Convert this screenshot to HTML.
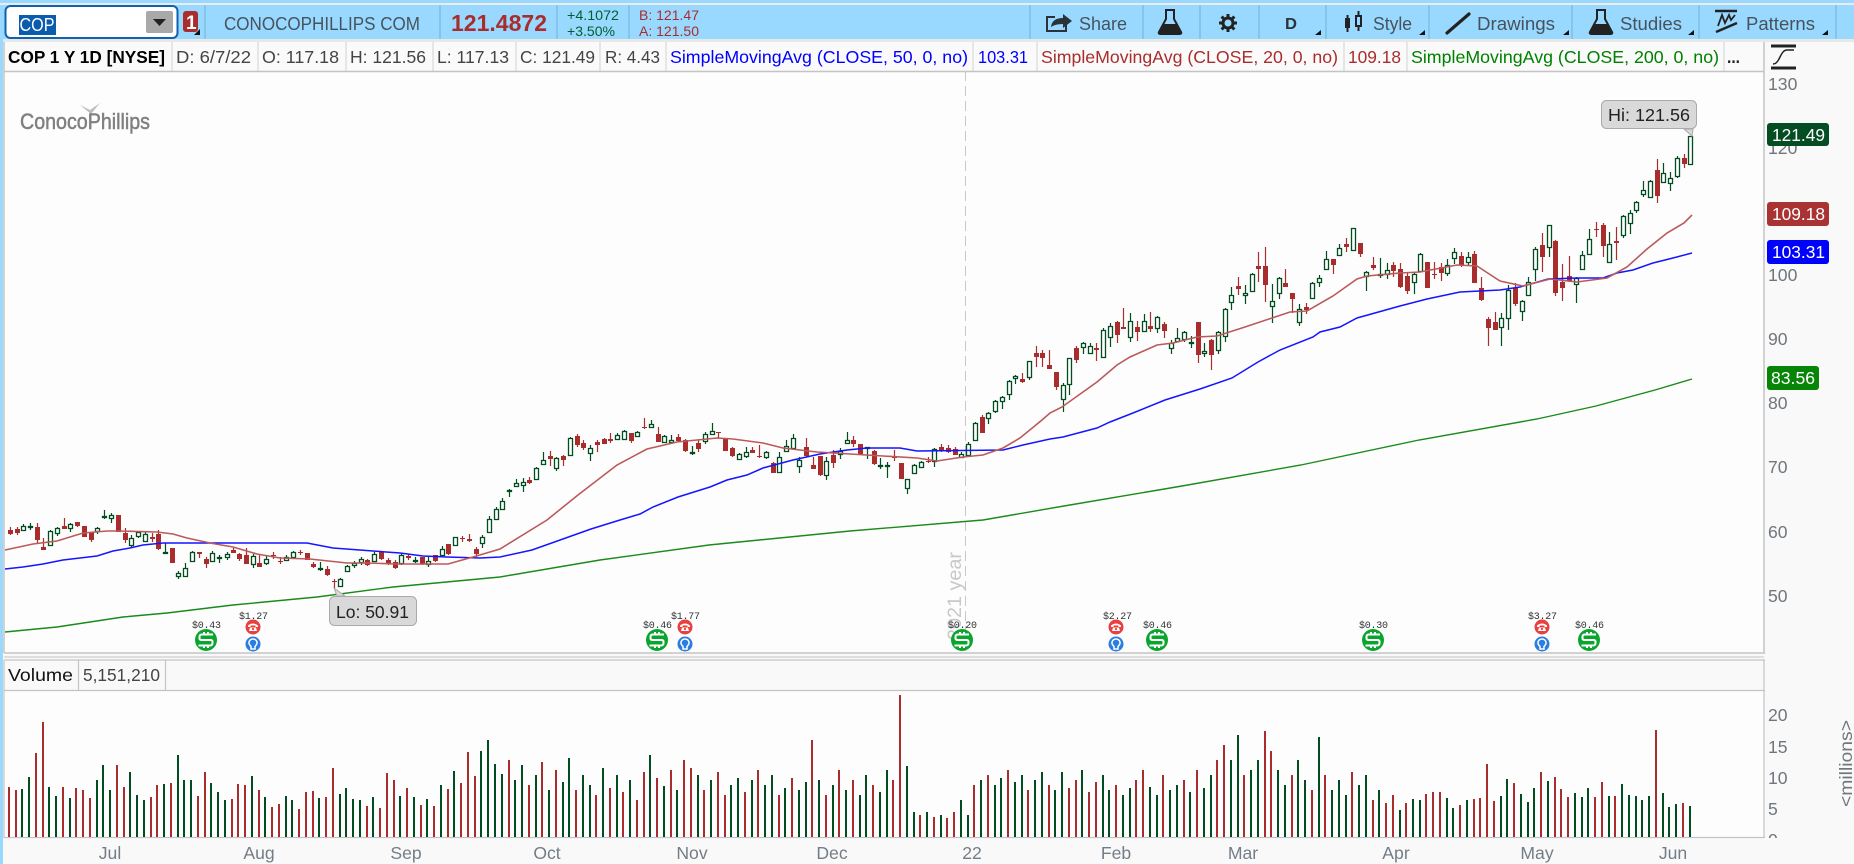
<!DOCTYPE html>
<html><head><meta charset="utf-8"><title>COP</title>
<style>html,body{margin:0;padding:0;background:#f9f9f9}svg{display:block}
text{font-family:"Liberation Sans",sans-serif}
.i{font-size:17.6px;fill:#444}.a{font-size:17.6px;fill:#6f767c}.t{font-size:18.5px;fill:#46535d}.e{font-family:"Liberation Mono",monospace;font-size:10px;fill:#333}</style></head>
<body>
<svg xmlns="http://www.w3.org/2000/svg" width="1854" height="864" viewBox="0 0 1854 864">
<defs>
<g id="flask"><path d="M-5 1h10M-4 1v9l-7 13q-1 2 2 2h18q3 0 2-2L4 10V1" fill="none" stroke="#222" stroke-width="2"/><path d="M-7 15H7l4 8q1 2-2 2H-9q-3 0-2-2z" fill="#222"/></g>
<g id="usd"><circle r="11" fill="#0aa52e"/><path d="M6-4.500V-5.500H-4Q-6.500-5.500-6.500-3V-1.500Q-6.500 0-4 0H4Q6.500 0 6.500 1.500V3Q6.500 5.500 4 5.500H-6.500V4.500M-2-8V-5.500M2-8V-5.500M-2 5.500V8M2 5.500V8" fill="none" stroke="#fff" stroke-width="2"/></g>
<g id="ph"><circle r="7.500" fill="#e8403f"/><path d="M-5-1.500Q0-5.500 5-1.500V0H2.500V-1.500H-2.500V0H-5zM-3 0.500H3L4 4H-4z" fill="#fff"/><circle cy="2" r="1.100" fill="#e8403f"/></g>
<g id="bu"><circle r="7.500" fill="#2a7de1"/><path d="M-2 2.500Q-4.500 0-4-2Q-3-5 0-5Q3-5 4-2Q4.500 0 2 2.500V5H-2z" fill="none" stroke="#fff" stroke-width="1.500"/></g>
</defs>
<rect width="1854" height="864" fill="#f9f9f9"/>
<!-- top -->
<rect width="1854" height="3" fill="#99d9ff"/><rect y="3" width="1854" height="2" fill="#ececec"/>
<rect y="5" width="1854" height="34" fill="#99d9ff"/><rect y="39" width="1854" height="3" fill="#e8e8e8"/>
<path d="M205 5V39M440 5V39M557 5V39M629 5V39M1030 5V39M1143 5V39M1200 5V39M1259 5V39M1326 5V39M1429 5V39M1572 5V39M1699 5V39M1836 5V39" stroke="#86c5ea" stroke-width="2"/>
<rect x="5.500" y="6" width="172" height="32" rx="5" fill="#fff" stroke="#0f62b0" stroke-width="2"/>
<rect x="19" y="15" width="37" height="20" fill="#0b5cad"/>
<text x="19.500" y="31" font-size="18" fill="#fff" textLength="35" lengthAdjust="spacingAndGlyphs">COP</text>
<rect x="146" y="11" width="27" height="22" rx="2" fill="#a9a9a9"/><path d="M153 19h13l-6.500 7z" fill="#222"/>
<rect x="183" y="11" width="15" height="21" rx="3" fill="#a92d2d"/><text x="186" y="29" font-size="19" font-weight="bold" fill="#fff">1</text><path d="M200 29v6h-6z" fill="#111"/>
<text x="224" y="30" font-size="18" fill="#46535d" textLength="196" lengthAdjust="spacingAndGlyphs">CONOCOPHILLIPS COM</text>
<text x="451" y="31" font-size="23" font-weight="bold" fill="#a92d2d" textLength="96" lengthAdjust="spacingAndGlyphs">121.4872</text>
<text x="567" y="20" font-size="13.500" fill="#00602f" textLength="52" lengthAdjust="spacingAndGlyphs">+4.1072</text>
<text x="567" y="36" font-size="13.500" fill="#00602f" textLength="48" lengthAdjust="spacingAndGlyphs">+3.50%</text>
<text x="639" y="20" font-size="13.500" fill="#a92d2d" textLength="60" lengthAdjust="spacingAndGlyphs">B: 121.47</text>
<text x="639" y="36" font-size="13.500" fill="#a92d2d" textLength="60" lengthAdjust="spacingAndGlyphs">A: 121.50</text>
<!-- tools -->
<path d="M1055 17h-8v14h19v-6" fill="none" stroke="#2b3238" stroke-width="2"/><path d="M1051 27q1-9 12-9v-4l9 7-9 7v-4q-8 0-12 3z" fill="#2b3238"/>
<text class="t" x="1079" y="30" textLength="48" lengthAdjust="spacingAndGlyphs">Share</text>
<use href="#flask" x="1170" y="9"/>
<g stroke="#222" stroke-width="3"><path d="M1228 14V32M1219 23H1237M1221.600 16.600L1234.400 29.400M1234.400 16.600L1221.600 29.400"/></g><circle cx="1228" cy="23" r="5" fill="#99d9ff" stroke="#222" stroke-width="3"/>
<text x="1285" y="29" font-size="16" font-weight="bold" fill="#2b3238" textLength="12" lengthAdjust="spacingAndGlyphs">D</text>
<path d="M1321 30v5h-6zM1425 30v5h-6zM1569 30v5h-6zM1694 30v5h-6zM1828 30v5h-6z" fill="#111"/>
<path d="M1347.500 15V32M1358.500 11V31" stroke="#222" stroke-width="2"/><rect x="1345" y="18" width="5" height="10" fill="#222"/><rect x="1356" y="16" width="5" height="10" fill="#99d9ff" stroke="#222" stroke-width="2"/>
<text class="t" x="1373" y="30" textLength="39" lengthAdjust="spacingAndGlyphs">Style</text>
<path d="M1447 33L1469 14" stroke="#222" stroke-width="3.200" stroke-linecap="round"/>
<text class="t" x="1477" y="30" textLength="78" lengthAdjust="spacingAndGlyphs">Drawings</text>
<use href="#flask" x="1601" y="9"/>
<text class="t" x="1620" y="30" textLength="62" lengthAdjust="spacingAndGlyphs">Studies</text>
<path d="M1715 11H1737" stroke="#222" stroke-width="2.500"/><path d="M1718 26L1722 15L1725 23L1729 15L1731 20L1735 15" fill="none" stroke="#222" stroke-width="1.800"/><path d="M1716 32L1737 23" stroke="#222" stroke-width="2.500"/>
<text class="t" x="1746" y="30" textLength="69" lengthAdjust="spacingAndGlyphs">Patterns</text>
<!-- left -->
<rect y="5" width="3" height="859" fill="#99d9ff"/>
<!-- info -->
<rect x="4" y="42" width="1760" height="29" fill="#fafafa"/>
<rect x="4" y="71" width="1760" height="582" fill="#fdfdfd"/>
<path d="M172 42V71M258 42V71M346 42V71M433 42V71M516 42V71M600 42V71M666 42V71M973 42V71M1037 42V71M1344 42V71M1407 42V71M1724 42V71" stroke="#d2d2d2"/>
<path d="M4 71.500H1764" stroke="#c4c4c4" stroke-width="1.500"/>
<text x="8" y="63" font-size="17.600" font-weight="bold" fill="#000" textLength="157" lengthAdjust="spacingAndGlyphs">COP 1 Y 1D [NYSE]</text>
<text class="i" x="176" y="63" textLength="75" lengthAdjust="spacingAndGlyphs">D: 6/7/22</text>
<text class="i" x="262" y="63" textLength="77" lengthAdjust="spacingAndGlyphs">O: 117.18</text>
<text class="i" x="350" y="63" textLength="76" lengthAdjust="spacingAndGlyphs">H: 121.56</text>
<text class="i" x="437" y="63" textLength="72" lengthAdjust="spacingAndGlyphs">L: 117.13</text>
<text class="i" x="520" y="63" textLength="75" lengthAdjust="spacingAndGlyphs">C: 121.49</text>
<text class="i" x="605" y="63" textLength="55" lengthAdjust="spacingAndGlyphs">R: 4.43</text>
<text x="670" y="63" font-size="17.600" fill="#0000ff" textLength="298" lengthAdjust="spacingAndGlyphs">SimpleMovingAvg (CLOSE, 50, 0, no)</text>
<text x="978" y="63" font-size="17.600" fill="#0000ff" textLength="50" lengthAdjust="spacingAndGlyphs">103.31</text>
<text x="1041" y="63" font-size="17.600" fill="#a92d2d" textLength="297" lengthAdjust="spacingAndGlyphs">SimpleMovingAvg (CLOSE, 20, 0, no)</text>
<text x="1348" y="63" font-size="17.600" fill="#a92d2d" textLength="53" lengthAdjust="spacingAndGlyphs">109.18</text>
<text x="1411" y="63" font-size="17.600" fill="#008000" textLength="308" lengthAdjust="spacingAndGlyphs">SimpleMovingAvg (CLOSE, 200, 0, no)</text>
<text x="1727" y="63" font-size="17.600" font-weight="bold" fill="#222" textLength="13" lengthAdjust="spacingAndGlyphs">...</text>
<path d="M1771 46H1796M1771 68H1796" stroke="#222" stroke-width="3"/><path d="M1773 64C1780 64 1780 50 1787 50C1790 50 1792 50 1794 50" fill="none" stroke="#222" stroke-width="1.500"/>
<!-- logo -->
<path d="M80 105L90 110L100 103L91 114z" fill="#bdbdbd"/>
<text x="20" y="129" font-size="22" fill="#808080" stroke="#808080" stroke-width="0.500" textLength="130" lengthAdjust="spacingAndGlyphs">ConocoPhillips</text>
<!-- 2021 -->
<path d="M965.500 71V653" stroke="#c8c8c8" stroke-dasharray="10 5"/>
<text transform="translate(961 640) rotate(-90)" font-size="19" fill="#c8c8c8" textLength="88" lengthAdjust="spacingAndGlyphs">2021 year</text>
<!-- candles red -->
<path fill="#a92d2d" d="M8 530h5v4h-5zM15 529h5v4h-5zM35 527h5v13h-5zM41 547h5v3h-5zM62 526h5v3h-5zM75 522h5v4h-5zM82 526h5v11h-5zM89 532h5v8h-5zM116 515h5v17h-5zM123 533h5v7h-5zM150 537h5v2h-5zM156 534h5v15h-5zM170 548h5v15h-5zM197 552h5v2h-5zM204 559h5v5h-5zM231 550h5v3h-5zM237 554h5v5h-5zM244 555h5v9h-5zM257 563h5v4h-5zM271 555h5v1h-5zM278 561h5v1h-5zM298 552h5v1h-5zM305 553h5v7h-5zM311 564h5v3h-5zM325 569h5v6h-5zM332 581h5v1h-5zM365 560h5v5h-5zM379 552h5v7h-5zM386 560h5v3h-5zM393 562h5v6h-5zM406 556h5v2h-5zM420 557h5v7h-5zM433 555h5v6h-5zM446 544h5v10h-5zM460 538h5v1h-5zM467 539h5v2h-5zM474 549h5v5h-5zM527 480h5v3h-5zM548 456h5v3h-5zM561 456h5v4h-5zM575 436h5v9h-5zM581 443h5v5h-5zM595 442h5v3h-5zM602 439h5v5h-5zM608 439h5v2h-5zM629 433h5v8h-5zM642 427h5v1h-5zM656 434h5v8h-5zM676 437h5v4h-5zM683 440h5v11h-5zM696 443h5v6h-5zM716 432h5v1h-5zM723 439h5v12h-5zM730 448h5v8h-5zM750 450h5v3h-5zM757 456h5v1h-5zM771 463h5v10h-5zM804 447h5v9h-5zM811 465h5v4h-5zM818 456h5v19h-5zM831 455h5v8h-5zM851 440h5v4h-5zM858 444h5v10h-5zM872 451h5v13h-5zM892 457h5v1h-5zM899 463h5v16h-5zM926 461h5v1h-5zM939 447h5v3h-5zM946 448h5v4h-5zM953 449h5v6h-5zM980 417h5v16h-5zM1020 379h5v3h-5zM1034 353h5v4h-5zM1040 353h5v5h-5zM1047 365h5v4h-5zM1054 372h5v15h-5zM1074 348h5v12h-5zM1094 348h5v2h-5zM1115 322h5v13h-5zM1121 327h5v2h-5zM1135 327h5v5h-5zM1148 326h5v3h-5zM1162 324h5v7h-5zM1196 322h5v33h-5zM1209 340h5v15h-5zM1236 286h5v3h-5zM1256 266h5v3h-5zM1263 266h5v19h-5zM1283 283h5v4h-5zM1290 293h5v6h-5zM1304 307h5v3h-5zM1331 259h5v6h-5zM1344 244h5v3h-5zM1358 243h5v11h-5zM1371 265h5v3h-5zM1391 265h5v6h-5zM1398 269h5v18h-5zM1405 276h5v15h-5zM1425 262h5v26h-5zM1432 274h5v1h-5zM1439 267h5v6h-5zM1459 256h5v9h-5zM1472 254h5v29h-5zM1479 288h5v12h-5zM1486 319h5v9h-5zM1493 322h5v8h-5zM1513 288h5v16h-5zM1540 245h5v12h-5zM1553 241h5v52h-5zM1560 282h5v6h-5zM1567 276h5v5h-5zM1594 229h5v1h-5zM1601 225h5v21h-5zM1614 241h5v2h-5zM1655 170h5v26h-5zM1682 158h5v6h-5z"/>
<path stroke="#a92d2d" stroke-width="1.200" fill="none" d="M10.500 527V535M17.500 527V535M37.500 523V543M43.500 538V550M64.500 518V529M77.500 522V527M84.500 526V537M91.500 532V542M125.500 528V543M152.500 533V542M158.500 530V550M199.500 552V558M206.500 557V568M233.500 548V553M239.500 553V561M246.500 548V564M259.500 555V567M273.500 552V559M280.500 557V564M300.500 550V555M313.500 562V568M327.500 566V576M334.500 579V588M367.500 559V566M381.500 552V560M388.500 558V565M395.500 560V569M408.500 554V560M422.500 557V565M435.500 555V562M448.500 544V555M462.500 536V542M469.500 534V542M476.500 547V557M529.500 477V484M550.500 451V466M563.500 455V466M577.500 434V447M583.500 440V450M597.500 440V452M604.500 438V444M610.500 433V443M631.500 433V443M644.500 418V429M658.500 427V442M678.500 434V442M685.500 439V452M698.500 440V452M718.500 432V439M725.500 438V451M732.500 447V457M752.500 447V453M759.500 445V458M773.500 462V473M806.500 438V457M813.500 457V469M820.500 456V476M833.500 450V468M853.500 436V447M874.500 450V465M894.500 450V461M928.500 457V463M941.500 444V452M948.500 445V453M955.500 447V455M982.500 415V433M1022.500 373V383M1036.500 346V367M1042.500 350V367M1049.500 350V369M1056.500 372V390M1076.500 346V363M1096.500 343V361M1117.500 321V343M1123.500 308V329M1137.500 321V341M1150.500 312V332M1164.500 322V338M1198.500 322V363M1211.500 339V370M1238.500 277V295M1258.500 252V282M1265.500 247V302M1285.500 269V287M1292.500 293V313M1306.500 303V314M1333.500 259V274M1346.500 238V252M1360.500 243V257M1373.500 257V270M1393.500 262V277M1400.500 263V288M1407.500 273V294M1434.500 262V279M1441.500 263V281M1461.500 252V267M1474.500 251V283M1481.500 277V301M1488.500 317V346M1495.500 312V330M1515.500 283V306M1542.500 233V272M1555.500 240V296M1562.500 264V301M1569.500 256V282M1596.500 222V237M1603.500 223V257M1616.500 227V260M1657.500 159V203M1684.500 154V168"/>
<!-- candles green -->
<path stroke="#004d1f" stroke-width="1.200" fill="none" d="M23.500 524V531M30.500 523V530M50.500 530V545M57.500 527V536M70.500 523V532M97.500 527V534M104.500 510V519M111.500 513V523M131.500 535V547M138.500 531V538M145.500 532V542M165.500 543V554M178.500 571V579M185.500 563V577M192.500 551V562M212.500 551V562M219.500 555V563M227.500 552V560M253.500 554V568M266.500 556V565M286.500 555V561M293.500 551V559M320.500 562V571M340.500 578V587M347.500 565V572M354.500 561V568M361.500 557V565M374.500 552V562M401.500 553V565M415.500 557V563M428.500 557V567M442.500 546V556M455.500 537V546M482.500 535V548M489.500 516V533M496.500 507V520M502.500 498V510M509.500 489V497M516.500 479V487M523.500 478V492M536.500 467V480M543.500 452V465M556.500 457V471M570.500 437V456M590.500 445V461M617.500 433V440M624.500 430V440M637.500 431V437M651.500 420V428M664.500 435V443M671.500 435V444M692.500 446V455M705.500 432V444M712.500 423V435M739.500 453V460M746.500 447V458M766.500 451V459M779.500 452V472M786.500 440V452M793.500 434V449M799.500 457V473M826.500 457V480M840.500 448V459M847.500 432V443M867.500 447V459M880.500 458V469M887.500 462V478M907.500 479V494M914.500 464V474M921.500 461V468M934.500 448V467M961.500 452V458M968.500 442V457M975.500 422V441M988.500 412V424M995.500 400V413M1002.500 396V409M1009.500 380V400M1015.500 375V384M1029.500 361V380M1063.500 383V412M1069.500 358V395M1083.500 342V354M1090.500 343V354M1103.500 328V357M1110.500 323V347M1130.500 313V342M1144.500 314V332M1157.500 316V333M1171.500 340V354M1177.500 328V342M1184.500 331V342M1191.500 336V348M1204.500 343V357M1218.500 331V354M1225.500 308V342M1231.500 287V310M1245.500 285V304M1252.500 273V292M1272.500 284V323M1279.500 277V299M1299.500 304V326M1312.500 282V298M1319.500 275V287M1326.500 251V270M1339.500 244V256M1353.500 228V251M1366.500 271V291M1380.500 258V278M1387.500 263V279M1414.500 273V294M1420.500 253V272M1447.500 259V276M1454.500 248V264M1468.500 252V265M1501.500 313V346M1508.500 285V330M1522.500 300V321M1528.500 277V296M1535.500 247V281M1549.500 225V257M1576.500 277V303M1582.500 251V270M1589.500 229V254M1609.500 232V262M1623.500 215V238M1630.500 210V234M1636.500 201V213M1643.500 181V197M1650.500 180V198M1663.500 163V183M1670.500 172V191M1677.500 156V178M1690.500 136V164"/>
<path stroke="#004d1f" fill="#fff" stroke-width="1.300" d="M21.500 526.500h4v4h-4zM28.500 526.500h4v1h-4zM48.500 531.500h4v14h-4zM55.500 528.500h4v5h-4zM68.500 524.500h4v4h-4zM95.500 528.500h4v3h-4zM102.500 516.500h4v1h-4zM109.500 515.500h4v3h-4zM129.500 538.500h4v7h-4zM136.500 532.500h4v4h-4zM143.500 534.500h4v7h-4zM163.500 552.500h4v1h-4zM176.500 573.500h4v3h-4zM183.500 568.500h4v8h-4zM190.500 552.500h4v9h-4zM210.500 553.500h4v8h-4zM217.500 557.500h4v1h-4zM225.500 554.500h4v3h-4zM251.500 556.500h4v8h-4zM264.500 559.500h4v4h-4zM284.500 557.500h4v3h-4zM291.500 552.500h4v5h-4zM318.500 568.500h4v1h-4zM338.500 579.500h4v7h-4zM345.500 566.500h4v5h-4zM352.500 563.500h4v2h-4zM359.500 559.500h4v3h-4zM372.500 554.500h4v7h-4zM399.500 555.500h4v8h-4zM413.500 560.500h4v1h-4zM426.500 561.500h4v3h-4zM440.500 549.500h4v6h-4zM453.500 537.500h4v8h-4zM480.500 537.500h4v6h-4zM487.500 519.500h4v13h-4zM494.500 509.500h4v10h-4zM500.500 501.500h4v8h-4zM507.500 490.500h4v1h-4zM514.500 483.500h4v3h-4zM521.500 482.500h4v3h-4zM534.500 468.500h4v11h-4zM541.500 460.500h4v4h-4zM554.500 458.500h4v10h-4zM568.500 438.500h4v17h-4zM588.500 448.500h4v5h-4zM615.500 435.500h4v4h-4zM622.500 431.500h4v8h-4zM635.500 432.500h4v4h-4zM649.500 424.500h4v3h-4zM662.500 436.500h4v6h-4zM669.500 440.500h4v2h-4zM690.500 452.500h4v1h-4zM703.500 434.500h4v7h-4zM710.500 431.500h4v3h-4zM737.500 454.500h4v5h-4zM744.500 452.500h4v4h-4zM764.500 452.500h4v5h-4zM777.500 457.500h4v15h-4zM784.500 446.500h4v5h-4zM791.500 438.500h4v10h-4zM797.500 460.500h4v6h-4zM824.500 461.500h4v14h-4zM838.500 451.500h4v3h-4zM845.500 440.500h4v3h-4zM865.500 447.500h4v1h-4zM878.500 465.500h4v1h-4zM885.500 465.500h4v1h-4zM905.500 479.500h4v9h-4zM912.500 465.500h4v8h-4zM919.500 462.500h4v5h-4zM932.500 449.500h4v12h-4zM959.500 454.500h4v3h-4zM966.500 444.500h4v11h-4zM973.500 423.500h4v17h-4zM986.500 413.500h4v5h-4zM993.500 401.500h4v10h-4zM1000.500 397.500h4v4h-4zM1007.500 381.500h4v13h-4zM1013.500 376.500h4v2h-4zM1027.500 361.500h4v16h-4zM1061.500 385.500h4v14h-4zM1067.500 358.500h4v26h-4zM1081.500 343.500h4v4h-4zM1088.500 346.500h4v7h-4zM1101.500 330.500h4v27h-4zM1108.500 326.500h4v11h-4zM1128.500 321.500h4v16h-4zM1142.500 321.500h4v10h-4zM1155.500 317.500h4v11h-4zM1169.500 343.500h4v5h-4zM1175.500 338.500h4v3h-4zM1182.500 332.500h4v7h-4zM1189.500 342.500h4v1h-4zM1202.500 351.500h4v2h-4zM1216.500 332.500h4v18h-4zM1223.500 309.500h4v27h-4zM1229.500 295.500h4v7h-4zM1243.500 293.500h4v2h-4zM1250.500 274.500h4v17h-4zM1270.500 301.500h4v5h-4zM1277.500 278.500h4v15h-4zM1297.500 309.500h4v13h-4zM1310.500 283.500h4v15h-4zM1317.500 278.500h4v4h-4zM1324.500 259.500h4v10h-4zM1337.500 248.500h4v7h-4zM1351.500 228.500h4v22h-4zM1364.500 272.500h4v4h-4zM1378.500 274.500h4v1h-4zM1385.500 270.500h4v4h-4zM1412.500 274.500h4v8h-4zM1418.500 254.500h4v17h-4zM1445.500 265.500h4v8h-4zM1452.500 252.500h4v6h-4zM1466.500 257.500h4v5h-4zM1499.500 318.500h4v9h-4zM1506.500 290.500h4v28h-4zM1520.500 301.500h4v10h-4zM1526.500 282.500h4v13h-4zM1533.500 249.500h4v20h-4zM1547.500 225.500h4v22h-4zM1574.500 278.500h4v6h-4zM1580.500 255.500h4v14h-4zM1587.500 239.500h4v15h-4zM1607.500 244.500h4v18h-4zM1621.500 216.500h4v19h-4zM1628.500 213.500h4v10h-4zM1634.500 202.500h4v8h-4zM1641.500 190.500h4v4h-4zM1648.500 181.500h4v16h-4zM1661.500 173.500h4v9h-4zM1668.500 178.500h4v5h-4zM1675.500 158.500h4v18h-4zM1688.500 136.500h4v28h-4z"/>
<!-- MAs -->
<polyline fill="none" stroke="#1a8a1a" stroke-width="1.400" points="5,632 57,627 123,617 167,613 233,605 317,597 393,587 500,577 600,560 709,545 850,531 983,520 1064,506 1182,486 1301,465 1419,440 1537,419 1596,406 1655,390 1692,379"/>
<polyline fill="none" stroke="#1515ff" stroke-width="1.500" points="5,569 23,567 43,564 63,560 97,556 113,551 130,548 143,545 163,543 307,543 333,548 373,551 400,553 423,556 447,557 480,558 500,557 532,550 591,529 620,520 640,514 653,507 678,497 710,487 727,480 747,475 763,468 793,460 820,454 847,450 867,448 900,448 917,451 1003,450 1023,445 1050,439 1063,437 1097,428 1110,422 1133,413 1165,400 1200,389 1232,378 1258,362 1280,350 1313,337 1320,332 1340,327 1357,318 1400,306 1427,299 1460,292 1500,290 1520,287 1548,279 1577,278 1603,278 1617,273 1633,270 1653,263 1673,258 1692,253"/>
<polyline fill="none" stroke="#bb5a5a" stroke-width="1.600" points="5,550 33,544 57,541 83,533 107,531 118,531 157,532 173,534 187,538 210,543 233,547 257,554 280,558 310,559 347,563 367,563 397,564 433,564 448,564 473,557 500,549 547,520 578,495 617,465 647,449 677,442 717,438 733,439 763,443 783,448 817,452 850,454 883,456 917,458 937,461 963,457 983,455 1003,448 1020,438 1042,420 1050,413 1062,407 1097,382 1117,365 1130,357 1157,345 1173,343 1197,337 1217,336 1245,327 1272,318 1290,312 1307,311 1333,296 1357,279 1367,276 1400,273 1420,272 1457,265 1477,266 1500,281 1523,286 1550,279 1577,282 1607,278 1627,267 1647,249 1667,233 1684,223 1692,215"/>
<!-- Events -->
<use href="#usd" x="206" y="640"/><use href="#usd" x="657" y="640"/><use href="#usd" x="962" y="640"/><use href="#usd" x="1157" y="640"/><use href="#usd" x="1373" y="640"/><use href="#usd" x="1589" y="640"/>
<use href="#ph" x="253" y="627"/><use href="#ph" x="685" y="627"/><use href="#ph" x="1116" y="627"/><use href="#ph" x="1542" y="627"/>
<use href="#bu" x="253" y="644"/><use href="#bu" x="685" y="644"/><use href="#bu" x="1116" y="644"/><use href="#bu" x="1542" y="644"/>
<text class="e" x="192" y="628" textLength="29">$0.43</text><text class="e" x="239" y="619" textLength="29">$1.27</text><text class="e" x="643" y="628" textLength="29">$0.46</text><text class="e" x="671" y="619" textLength="29">$1.77</text><text class="e" x="948" y="628" textLength="29">$0.20</text><text class="e" x="1103" y="619" textLength="29">$2.27</text><text class="e" x="1143" y="628" textLength="29">$0.46</text><text class="e" x="1359" y="628" textLength="29">$0.30</text><text class="e" x="1528" y="619" textLength="29">$3.27</text><text class="e" x="1575" y="628" textLength="29">$0.46</text>
<!-- Hi Lo -->
<path d="M1684 129L1692 136L1693 129z" fill="#d9d9d9" stroke="#aaa"/><rect x="1601.500" y="100.500" width="95" height="28" rx="5" fill="#d9d9d9" stroke="#aaa"/>
<text x="1608" y="121" font-size="17.600" fill="#222" textLength="82" lengthAdjust="spacingAndGlyphs">Hi: 121.56</text>
<path d="M334 588L337 596L345 596z" fill="#d9d9d9" stroke="#aaa"/><rect x="329.500" y="596.500" width="87" height="29" rx="5" fill="#d9d9d9" stroke="#aaa"/>
<text x="336" y="618" font-size="17.600" fill="#222" textLength="73" lengthAdjust="spacingAndGlyphs">Lo: 50.91</text>
<!-- frame -->
<path d="M4 653H1765M1764 42V653M4 42V653" stroke="#c4c4c4" stroke-width="1.500" fill="none"/>
<rect x="4" y="656" width="1760" height="2" fill="#dedede"/>
<!-- axis -->
<text class="a" x="1768" y="90">130</text><text class="a" x="1768" y="154">120</text><text class="a" x="1768" y="281">100</text><text class="a" x="1768" y="345">90</text><text class="a" x="1768" y="409">80</text><text class="a" x="1768" y="473">70</text><text class="a" x="1768" y="538">60</text><text class="a" x="1768" y="602">50</text>
<rect x="1767" y="123" width="62" height="23" rx="3" fill="#044d22"/><text x="1772" y="141" font-size="17.600" fill="#fff" textLength="53" lengthAdjust="spacingAndGlyphs">121.49</text>
<rect x="1767" y="202" width="62" height="24" rx="3" fill="#a93232"/><text x="1772" y="220" font-size="17.600" fill="#fff" textLength="53" lengthAdjust="spacingAndGlyphs">109.18</text>
<rect x="1767" y="240" width="62" height="24" rx="3" fill="#0000ff"/><text x="1772" y="258" font-size="17.600" fill="#fff" textLength="53" lengthAdjust="spacingAndGlyphs">103.31</text>
<rect x="1767" y="366" width="52" height="24" rx="3" fill="#078507"/><text x="1771" y="384" font-size="17.600" fill="#fff" textLength="44" lengthAdjust="spacingAndGlyphs">83.56</text>
<!-- volume -->
<rect x="4" y="660" width="1760" height="30" fill="#f9f9f9"/><rect x="4" y="691" width="1760" height="146" fill="#fdfdfd"/>
<path d="M4 660H1765M4 690.500H1765M4 837.500H1765M1764 660V838M4 660V838M78.500 660V690M165.500 660V690" stroke="#c4c4c4" stroke-width="1.200" fill="none"/>
<text x="8" y="681" font-size="17.600" fill="#111" textLength="65" lengthAdjust="spacingAndGlyphs">Volume</text>
<text class="i" x="83" y="681" textLength="77" lengthAdjust="spacingAndGlyphs">5,151,210</text>
<path shape-rendering="crispEdges" stroke="#a92d2d" stroke-width="2" fill="none" d="M9 787V837M16 790V837M36 753V837M43 722V837M63 787V837M76 788V837M83 790V837M90 798V837M117 765V837M124 787V837M151 797V837M157 785V837M171 783V837M198 796V837M205 772V837M232 799V837M238 784V837M245 785V837M259 790V837M272 807V837M279 804V837M299 809V837M306 792V837M313 791V837M326 797V837M333 768V837M367 806V837M380 808V837M387 773V837M394 780V837M407 788V837M421 805V837M434 806V837M448 789V837M461 783V837M468 752V837M475 776V837M509 760V837M529 785V837M542 762V837M556 770V837M576 790V837M596 795V837M610 788V837M623 792V837M637 800V837M644 772V837M657 778V837M671 770V837M684 760V837M691 768V837M704 790V837M718 772V837M725 795V837M745 792V837M758 770V837M779 795V837M792 778V837M812 740V837M826 795V837M839 770V837M853 780V837M873 785V837M893 780V837M900 695V837M920 815V837M934 817V837M947 818V837M954 812V837M974 785V837M988 775V837M1008 770V837M1028 790V837M1049 785V837M1069 788V837M1076 780V837M1089 792V837M1096 782V837M1116 785V837M1136 780V837M1143 770V837M1163 775V837M1184 780V837M1197 770V837M1217 760V837M1224 745V837M1244 775V837M1265 731V837M1271 751V837M1292 775V837M1312 790V837M1325 775V837M1352 772V837M1373 800V837M1386 803V837M1393 795V837M1406 803V837M1426 794V837M1433 792V837M1440 792V837M1460 805V837M1474 799V837M1480 798V837M1487 764V837M1494 801V837M1514 783V837M1541 772V837M1555 777V837M1561 789V837M1568 797V837M1595 797V837M1602 782V837M1615 796V837M1656 730V837M1683 803V837"/>
<path shape-rendering="crispEdges" stroke="#004d1f" stroke-width="2" fill="none" d="M22 789V837M29 777V837M49 787V837M56 796V837M70 798V837M97 780V837M103 765V837M110 790V837M130 772V837M137 795V837M144 800V837M164 784V837M178 755V837M184 780V837M191 780V837M211 783V837M218 792V837M225 800V837M252 776V837M265 797V837M286 796V837M292 800V837M319 798V837M340 794V837M346 788V837M353 799V837M360 800V837M373 797V837M400 796V837M414 797V837M427 799V837M441 785V837M454 771V837M481 751V837M488 740V837M495 764V837M502 774V837M515 780V837M522 765V837M536 775V837M549 790V837M563 782V837M569 758V837M583 775V837M590 785V837M603 768V837M617 775V837M630 780V837M650 755V837M664 786V837M677 790V837M698 775V837M711 780V837M731 785V837M738 778V837M752 780V837M765 785V837M772 775V837M785 788V837M799 790V837M806 782V837M819 780V837M833 785V837M846 790V837M860 795V837M866 775V837M880 792V837M887 770V837M907 766V837M914 812V837M927 812V837M941 815V837M961 800V837M968 815V837M981 780V837M995 785V837M1001 778V837M1015 782V837M1022 775V837M1035 780V837M1042 772V837M1055 790V837M1062 772V837M1082 770V837M1103 775V837M1109 790V837M1123 795V837M1130 788V837M1150 787V837M1157 795V837M1170 790V837M1177 785V837M1190 792V837M1204 788V837M1211 775V837M1231 760V837M1238 735V837M1251 770V837M1258 760V837M1278 770V837M1285 785V837M1298 760V837M1305 780V837M1319 737V837M1332 790V837M1339 780V837M1346 795V837M1359 785V837M1366 775V837M1379 790V837M1400 810V837M1413 799V837M1420 800V837M1447 798V837M1453 808V837M1467 800V837M1501 796V837M1507 779V837M1521 794V837M1528 802V837M1534 788V837M1548 781V837M1575 793V837M1582 797V837M1588 788V837M1609 796V837M1622 784V837M1629 795V837M1636 796V837M1642 800V837M1649 796V837M1663 793V837M1669 807V837M1676 804V837M1690 806V837"/>
<text class="a" x="1768" y="721">20</text><text class="a" x="1768" y="753">15</text><text class="a" x="1768" y="784">10</text><text class="a" x="1768" y="815">5</text>
<clipPath id="c0"><rect x="1765" y="820" width="40" height="18"/></clipPath><text class="a" x="1768" y="846" clip-path="url(#c0)">0</text>
<text class="a" transform="translate(1852 807) rotate(-90)" textLength="87" lengthAdjust="spacingAndGlyphs">&lt;millions&gt;</text>
<g text-anchor="middle" font-size="17.600" fill="#737d87"><text x="110" y="859">Jul</text><text x="259" y="859">Aug</text><text x="406" y="859">Sep</text><text x="547" y="859">Oct</text><text x="692" y="859">Nov</text><text x="832" y="859">Dec</text><text x="972" y="859">22</text><text x="1116" y="859">Feb</text><text x="1243" y="859">Mar</text><text x="1396" y="859">Apr</text><text x="1537" y="859">May</text><text x="1673" y="859">Jun</text></g>
</svg>
</body></html>
